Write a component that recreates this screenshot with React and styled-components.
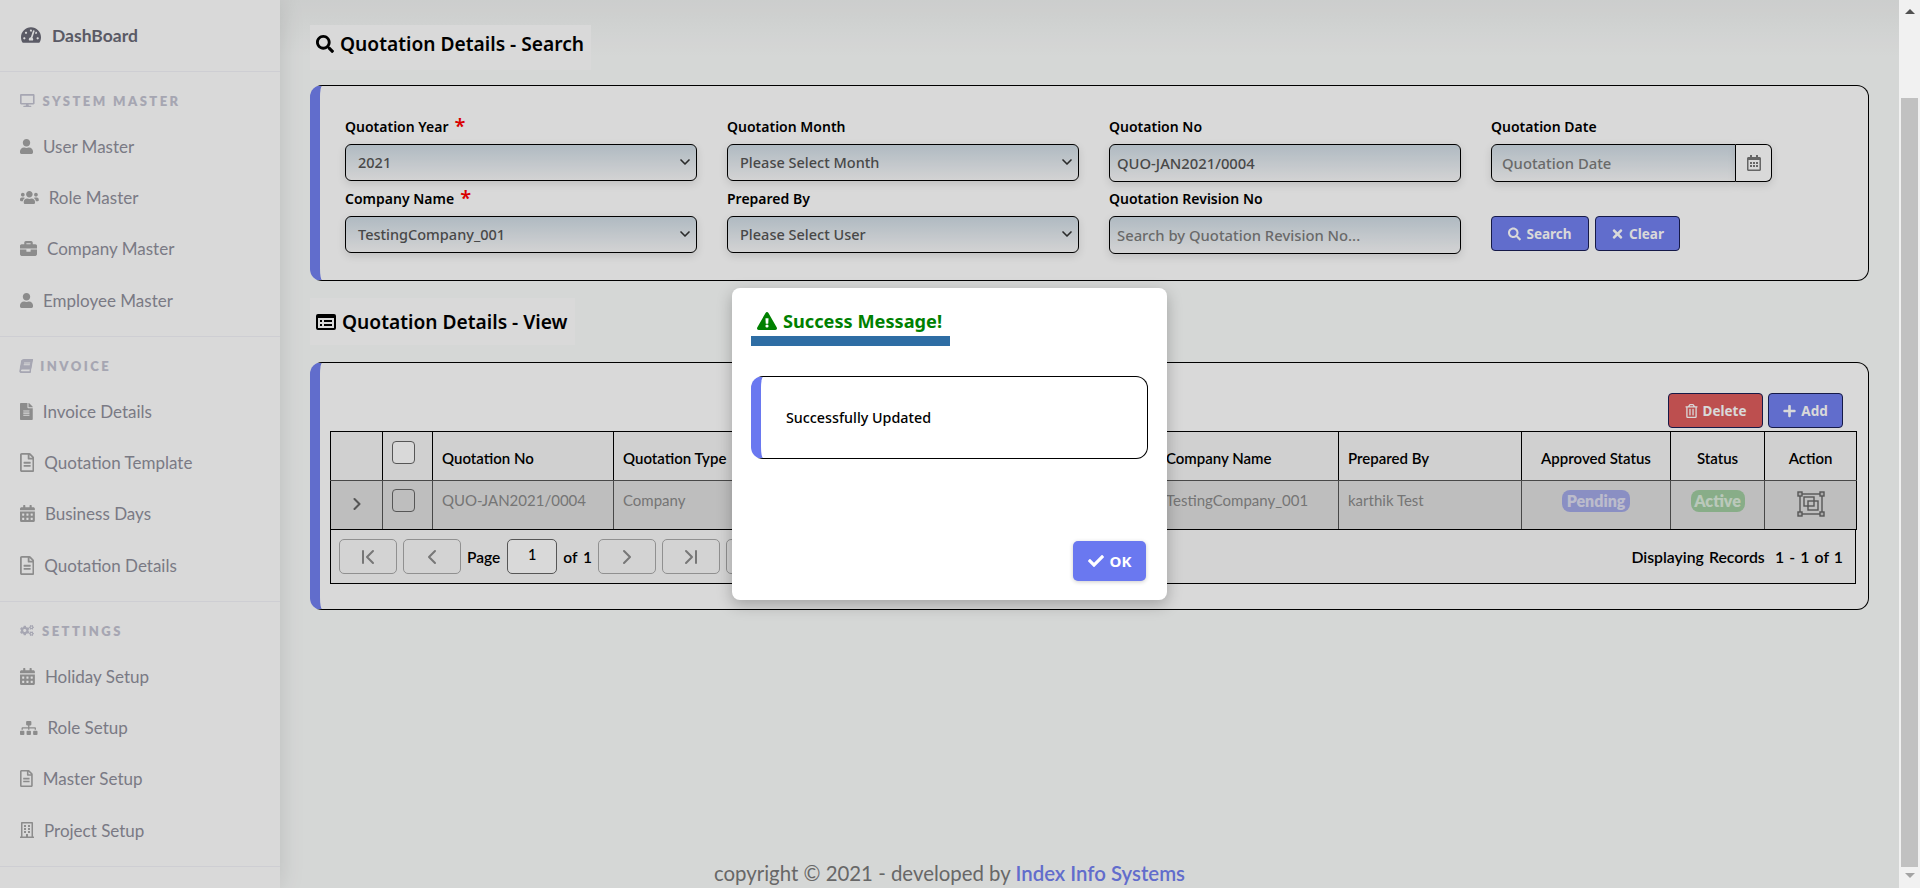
import React from "react";
import styled, { createGlobalStyle } from "styled-components";
import {
  FaTachometerAlt, FaDesktop, FaUser, FaUsers, FaBriefcase, FaBook, FaFileAlt, FaRegFileAlt,
  FaRegCalendarAlt, FaCalendarAlt, FaCogs, FaSitemap, FaRegBuilding, FaSearch, FaTimes, FaRegTrashAlt,
  FaPlus, FaCheck, FaExclamationTriangle,
} from "react-icons/fa";
import { ChevronDown, ChevronRight, ChevronLeft, ChevronFirst, ChevronLast } from "lucide-react";

const NUNITO = `"Lato", "Open Sans", sans-serif`;
const TREB = `"Noto Sans", "Open Sans", sans-serif`;

const Global = createGlobalStyle`
  html, body { margin: 0; padding: 0; height: 100%; overflow: hidden; }
  * { box-sizing: border-box; }
  body { font-family: ${NUNITO}; background: #fff; }
`;

const Shell = styled.div`
  position: relative;
  display: flex;
  width: 1920px;
  height: 888px;
  overflow: hidden;
`;

const Page = styled.div`
  position: relative;
  display: flex;
  flex: 1;
  min-width: 0;
`;

const Sidebar = styled.aside`
  width: 280px;
  flex-shrink: 0;
  background: #fff;
  box-shadow: 0 0 24px rgba(0, 0, 0, 0.12);
  position: relative;
  z-index: 1;
`;

const BrandLink = styled.div`
  height: 72px;
  display: flex;
  align-items: center;
  padding-left: 21px;
  padding-bottom: 1px;
  gap: 11px;
  font-size: 17.5px;
  font-weight: 700;
  color: #6a6a77;
  border-bottom: 1px solid #f2f2f8;
  svg { width: 20px; height: 18px; }
`;

const Section = styled.section`
  height: ${(p) => p.$h}px;
  border-bottom: 1px solid #f2f2f8;
`;

const SectionTitle = styled.div`
  height: 49px;
  padding: 8px 0 0 20px;
  display: flex;
  align-items: center;
  gap: 8px;
  font-size: 13px;
  font-weight: 800;
  letter-spacing: 2.45px;
  color: #c4c4d2;
  svg { width: ${(p) => p.$w}px; height: ${(p) => p.$h}px; }
`;

const NavItem = styled.div`
  height: 51.2px;
  display: flex;
  align-items: center;
  padding-left: 20px;
  gap: 10px;
  font-size: 17px;
  color: #90909c;
  svg {
    width: ${(p) => p.$w || 13}px;
    height: ${(p) => p.$h || 15}px;
    color: #a5a5a5;
    flex-shrink: 0;
  }
`;

const Main = styled.main`
  flex: 1;
  min-width: 0;
  display: flex;
  flex-direction: column;
  padding: 25px 30px 0;
  background: linear-gradient(#f0f2f1 0, #fbfdfc 56px);
`;

const TitleBox = styled.div`
  align-self: flex-start;
  height: ${(p) => p.$h || 45}px;
  margin-bottom: ${(p) => p.$mb || 15}px;
  display: flex;
  align-items: center;
  gap: 6px;
  padding: 0 7px ${(p) => p.$pb || 0}px 6px;
  background: #fff;
  font-family: ${TREB};
  font-size: 19.2px;
  font-weight: 600;
  color: #000;
  svg { font-size: 18px; }
`;

const Card = styled.section`
  position: relative;
  border: 1px solid #000;
  border-left: 10px solid #7380f0;
  border-radius: 12px;
  background: #fff;
`;

const SearchCard = styled(Card)`
  height: 196px;
  margin-bottom: 17px;
  padding: 34px 27px 0 25px;
  display: grid;
  grid-template-columns: repeat(4, 352px);
  grid-template-rows: 72px 72px;
  column-gap: 30px;
`;

const Field = styled.div`
  display: flex;
  flex-direction: column;
`;

const Label = styled.label`
  height: 24px;
  padding-bottom: 11px;
  display: flex;
  align-items: center;
  gap: 6px;
  font-family: ${TREB};
  font-size: 14px;
  font-weight: 600;
  color: #000;
`;

const Req = styled.span`
  color: #f00;
  font-size: 20px;
  line-height: 1;
  position: relative;
  top: -1px;
`;

const fieldSkin = `
  border: 1px solid #000;
  border-radius: 6px;
  background: linear-gradient(#cfdbe4 0, #f2f4f6 85%, #f8f8f8 100%);
  box-shadow: 0 3px 8px rgba(0, 0, 0, 0.12);
  font-family: ${TREB};
  font-weight: 500;
  color: #555;
`;

const SelectBox = styled.div`
  ${fieldSkin}
  height: 37px;
  font-size: 14.5px;
  display: flex;
  align-items: center;
  justify-content: space-between;
  padding: 0 3px 1px 12px;
  svg { color: #333; }
`;

const TextBox = styled.div`
  ${fieldSkin}
  height: 38px;
  font-size: 14.8px;
  display: flex;
  align-items: center;
  padding-left: ${(p) => p.$pl || 7}px;
  flex: ${(p) => (p.$grow ? 1 : "none")};
  color: ${(p) => (p.$muted ? "#7c7c7c" : "#555")};
  ${(p) => p.$joined && "border-radius: 6px 0 0 6px;"}
`;

const DateWrap = styled.div`
  display: flex;
  width: 281px;
`;

const Addon = styled.div`
  width: 36px;
  height: 38px;
  border: 1px solid #000;
  border-left: 0;
  border-radius: 0 6px 6px 0;
  display: flex;
  align-items: center;
  justify-content: center;
  background: #fff;
  box-shadow: 0 3px 8px rgba(0, 0, 0, 0.12);
  color: #777;
  svg { width: 14px; height: 16px; }
`;

const ButtonRow = styled.div`
  display: flex;
  gap: 6px;
  padding-top: 24px;
`;

const ActionButton = styled.button`
  height: 35px;
  width: ${(p) => p.$w}px;
  padding: 0;
  display: inline-flex;
  align-items: center;
  justify-content: center;
  gap: 5px;
  border: 1px solid #1a1f55;
  border-radius: 4px;
  background: ${(p) => p.$bg || "#7380f0"};
  color: #fff;
  font-family: ${TREB};
  font-size: 13.5px;
  font-weight: 700;
  svg { width: 13px; height: 14px; }
`;

const TableCard = styled(Card)`
  height: 248px;
  padding: 30px 11px 0 10px;
`;

const Toolbar = styled.div`
  display: flex;
  justify-content: flex-end;
  gap: 5px;
  height: 38px;
  padding-right: 14px;
`;

const Grid = styled.table`
  width: 1526px;
  table-layout: fixed;
  border-collapse: collapse;
  font-size: 15px;
  color: #000;
`;

const Th = styled.th`
  height: 49px;
  padding: 3px 9px 0;
  border: 1px solid #000;
  border-bottom-color: #555;
  background: #f5f5f5;
  font-weight: 600;
  text-align: ${(p) => (p.$center ? "center" : "left")};
  white-space: nowrap;
`;

const Td = styled.td`
  height: 49px;
  padding: 0 9px ${(p) => p.$pb ?? 11}px;
  border: 1px solid #555;
  border-bottom-color: #000;
  background: #e0e0e0;
  color: #8a8a8a;
  font-size: 15px;
  text-align: ${(p) => (p.$center ? "center" : "left")};
  white-space: nowrap;
  &:first-child { border-left-color: #000; }
  &:last-child { border-right-color: #000; }
`;

const CheckBox = styled.span`
  display: block;
  width: 23px;
  height: 23px;
  margin-top: ${(p) => (p.$row ? 0 : -10)}px;
  border: 1px solid #666;
  border-radius: 4px;
  background: ${(p) => (p.$row ? "#e0e0e0" : "#fff")};
`;

const Badge = styled.span`
  display: inline-block;
  width: ${(p) => p.$w}px;
  height: 22px;
  line-height: 22px;
  border-radius: 8px;
  background: ${(p) => p.$bg};
  color: ${(p) => p.$fg};
  font-size: 16px;
  font-weight: 800;
  text-align: center;
`;

const Pager = styled.div`
  width: 1526px;
  height: 54px;
  display: flex;
  align-items: center;
  padding: 0 12px 0 8px;
  border: 1px solid #000;
  border-top: 0;
  background: #f8f8f8;
  font-size: 15.5px;
  font-weight: 600;
  color: #000;
`;

const PagerButton = styled.span`
  width: 58px;
  height: 35px;
  margin-right: 6px;
  display: flex;
  align-items: center;
  justify-content: center;
  border: 1px solid #aaa;
  border-radius: 5px;
  color: #8c8c8c;
`;

const PageInput = styled.span`
  width: 50px;
  height: 35px;
  margin: 0 6px 0 7px;
  padding-bottom: 5px;
  display: flex;
  align-items: center;
  justify-content: center;
  border: 1px solid #666;
  border-radius: 5px;
  background: #fff;
  font-size: 14.5px;
  font-weight: 500;
`;

const PageText = styled.span`
  margin-right: ${(p) => p.$mr || 0}px;
  word-spacing: 2px;
`;

const Records = styled.span`
  margin-left: auto;
  word-spacing: 1.2px;
  font-size: 15.8px;
`;

const Footer = styled.footer`
  margin: auto -30px 0 -310px;
  height: 27px;
  position: relative;
  text-align: center;
  font-size: 20.4px;
  color: #7a7a7a;
`;

const FooterLink = styled.span`
  color: #7380f0;
  font-weight: 600;
`;

const Backdrop = styled.div`
  position: absolute;
  inset: 0;
  z-index: 5;
  background: rgba(0, 0, 0, 0.15);
  display: flex;
  align-items: center;
  justify-content: center;
`;

const Modal = styled.div`
  width: 435px;
  height: 312px;
  display: flex;
  flex-direction: column;
  padding: 20px 19px 19px;
  border-radius: 8px;
  background: #fff;
  box-shadow: 0 5px 15px rgba(0, 0, 0, 0.25);
`;

const ModalTitle = styled.div`
  width: 199px;
  height: 38px;
  margin-bottom: 30px;
  padding: 0 0 3px 6px;
  display: flex;
  align-items: center;
  gap: 6px;
  border-bottom: 10px solid #2e6da4;
  font-family: ${TREB};
  font-size: 18.2px;
  font-weight: 700;
  color: #008000;
  white-space: nowrap;
  svg { font-size: 20px; }
`;

const Message = styled.div`
  height: 83px;
  display: flex;
  align-items: center;
  padding-left: 25px;
  border: 1px solid #000;
  border-left: 10px solid #6a78f0;
  border-radius: 12px;
  font-family: ${TREB};
  font-size: 14.3px;
  font-weight: 500;
  color: #000;
`;

const ModalFoot = styled.div`
  margin-top: auto;
  display: flex;
  justify-content: flex-end;
  padding-right: 2px;
`;

const OkButton = styled.button`
  width: 73px;
  height: 40px;
  display: flex;
  align-items: center;
  justify-content: center;
  gap: 6px;
  border: 0;
  border-radius: 5px;
  background: #6a78f0;
  box-shadow: 0 1px 4px rgba(0, 0, 0, 0.2);
  color: #fff;
  font-family: ${TREB};
  font-size: 15px;
  font-weight: 700;
  svg { font-size: 16px; }
`;

const Scrollbar = styled.div`
  width: 21px;
  flex-shrink: 0;
  height: 888px;
  background: #f1f1f1;
  display: flex;
  flex-direction: column;
  align-items: center;
  padding: 9px 0;
`;

const ScrollArrow = styled.span`
  width: 0;
  height: 0;
  border-left: 5px solid transparent;
  border-right: 5px solid transparent;
  ${(p) => (p.$up ? "border-bottom: 5px solid #505050;" : "border-top: 5px solid #a3a3a3;")}
`;

const ScrollThumb = styled.div`
  width: 17px;
  height: 769px;
  margin: 84px 0 6px;
  background: #c1c1c1;
`;

function ActionIcon() {
  return (
    <svg width="30" height="26" viewBox="0 0 30 26" fill="none" stroke="#666" strokeWidth="1.4">
      <rect x="4" y="3" width="22" height="20" />
      <rect x="2" y="1" width="4" height="4" fill="#c8c8c8" />
      <rect x="24" y="1" width="4" height="4" fill="#c8c8c8" />
      <rect x="2" y="21" width="4" height="4" fill="#c8c8c8" />
      <rect x="24" y="21" width="4" height="4" fill="#c8c8c8" />
      <rect x="8" y="6" width="10" height="9" />
      <rect x="12" y="10" width="10" height="9" />
    </svg>
  );
}

const cols = [52, 50, 181, 147, 396, 182, 183, 149, 94, 92];

export default function App() {
  return (
    <Shell>
      <Global />
      <Page>
        <Sidebar>
          <BrandLink><FaTachometerAlt />DashBoard</BrandLink>
          <Section $h={265}>
            <SectionTitle $w={14.6} $h={13}><FaDesktop />SYSTEM MASTER</SectionTitle>
            <NavItem><FaUser />User Master</NavItem>
            <NavItem $w={18.75}><FaUsers />Role Master</NavItem>
            <NavItem $w={17} $h={17}><FaBriefcase />Company Master</NavItem>
            <NavItem><FaUser />Employee Master</NavItem>
          </Section>
          <Section $h={265}>
            <SectionTitle $w={12.25} $h={14}><FaBook style={{ transform: "skewX(-10deg)" }} />INVOICE</SectionTitle>
            <NavItem $w={12.75} $h={17}><FaFileAlt />Invoice Details</NavItem>
            <NavItem $w={14.25} $h={19}><FaRegFileAlt />Quotation Template</NavItem>
            <NavItem $w={14.9} $h={17}><FaCalendarAlt />Business Days</NavItem>
            <NavItem $w={14.25} $h={19}><FaRegFileAlt />Quotation Details</NavItem>
          </Section>
          <Section $h={265}>
            <SectionTitle $w={14} $h={11}><FaCogs />SETTINGS</SectionTitle>
            <NavItem $w={14.9} $h={17}><FaCalendarAlt />Holiday Setup</NavItem>
            <NavItem $w={17.5} $h={14}><FaSitemap />Role Setup</NavItem>
            <NavItem $w={12.75} $h={17}><FaRegFileAlt />Master Setup</NavItem>
            <NavItem $w={14} $h={16}><FaRegBuilding />Project Setup</NavItem>
          </Section>
        </Sidebar>
        <Main>
          <TitleBox $pb={8}><FaSearch />Quotation Details - Search</TitleBox>
          <SearchCard>
            <Field>
              <Label>Quotation Year <Req>*</Req></Label>
              <SelectBox>2021<ChevronDown size={16} strokeWidth={2.5} /></SelectBox>
            </Field>
            <Field>
              <Label>Quotation Month</Label>
              <SelectBox>Please Select Month<ChevronDown size={16} strokeWidth={2.5} /></SelectBox>
            </Field>
            <Field>
              <Label>Quotation No</Label>
              <TextBox>QUO-JAN2021/0004</TextBox>
            </Field>
            <Field>
              <Label>Quotation Date</Label>
              <DateWrap>
                <TextBox $grow $muted $joined $pl={10}>Quotation Date</TextBox>
                <Addon><FaRegCalendarAlt /></Addon>
              </DateWrap>
            </Field>
            <Field>
              <Label>Company Name <Req>*</Req></Label>
              <SelectBox>TestingCompany_001<ChevronDown size={16} strokeWidth={2.5} /></SelectBox>
            </Field>
            <Field>
              <Label>Prepared By</Label>
              <SelectBox>Please Select User<ChevronDown size={16} strokeWidth={2.5} /></SelectBox>
            </Field>
            <Field>
              <Label>Quotation Revision No</Label>
              <TextBox $muted>Search by Quotation Revision No...</TextBox>
            </Field>
            <ButtonRow>
              <ActionButton $w={98}><FaSearch />Search</ActionButton>
              <ActionButton $w={85}><FaTimes />Clear</ActionButton>
            </ButtonRow>
          </SearchCard>
          <TitleBox $h={47} $mb={17}>
            <svg width="20" height="18" viewBox="0 0 20 18"><path d="M2 1h16a2 2 0 0 1 2 2v12a2 2 0 0 1-2 2H2a2 2 0 0 1-2-2V3a2 2 0 0 1 2-2zm0 4v10h16V5zm2 2h2v2H4zm4 0h8v2H8zM4 11h2v2H4zm4 0h8v2H8z" fill="#000" fillRule="evenodd" /></svg>
            Quotation Details - View
          </TitleBox>
          <TableCard>
            <Toolbar>
              <ActionButton $w={95} $bg="#de5d5d"><FaRegTrashAlt />Delete</ActionButton>
              <ActionButton $w={75}><FaPlus />Add</ActionButton>
            </Toolbar>
            <Grid>
              <colgroup>
                {cols.map((w, i) => <col key={i} style={{ width: w }} />)}
              </colgroup>
              <thead>
                <tr>
                  <Th />
                  <Th><CheckBox /></Th>
                  <Th>Quotation No</Th>
                  <Th>Quotation Type</Th>
                  <Th />
                  <Th>Company Name</Th>
                  <Th>Prepared By</Th>
                  <Th $center>Approved Status</Th>
                  <Th $center>Status</Th>
                  <Th $center>Action</Th>
                </tr>
              </thead>
              <tbody>
                <tr>
                  <Td $center $pb={0}><ChevronRight size={20} strokeWidth={2.5} color="#666" /></Td>
                  <Td $pb={9}><CheckBox $row /></Td>
                  <Td>QUO-JAN2021/0004</Td>
                  <Td>Company</Td>
                  <Td />
                  <Td>TestingCompany_001</Td>
                  <Td>karthik Test</Td>
                  <Td $center $pb={8}><Badge $w={68} $bg="#a3a9e6" $fg="#ddddef">Pending</Badge></Td>
                  <Td $center $pb={8}><Badge $w={54} $bg="#a0cca0" $fg="#dcecdc">Active</Badge></Td>
                  <Td $center $pb={0}><ActionIcon /></Td>
                </tr>
              </tbody>
            </Grid>
            <Pager>
              <PagerButton><ChevronFirst size={24} strokeWidth={2} /></PagerButton>
              <PagerButton><ChevronLeft size={24} strokeWidth={2} /></PagerButton>
              <PageText>Page</PageText>
              <PageInput>1</PageInput>
              <PageText $mr={6}>of 1</PageText>
              <PagerButton><ChevronRight size={24} strokeWidth={2} /></PagerButton>
              <PagerButton><ChevronLast size={24} strokeWidth={2} /></PagerButton>
              <PagerButton />
              <Records>Displaying Records&nbsp; 1 - 1 of 1</Records>
            </Pager>
          </TableCard>
          <Footer>copyright © 2021 - developed by <FooterLink>Index Info Systems</FooterLink></Footer>
        </Main>
        <Backdrop>
          <Modal>
            <ModalTitle><FaExclamationTriangle />Success Message!</ModalTitle>
            <Message>Successfully Updated</Message>
            <ModalFoot>
              <OkButton><FaCheck />OK</OkButton>
            </ModalFoot>
          </Modal>
        </Backdrop>
      </Page>
      <Scrollbar>
        <ScrollArrow $up />
        <ScrollThumb />
        <ScrollArrow />
      </Scrollbar>
    </Shell>
  );
}
